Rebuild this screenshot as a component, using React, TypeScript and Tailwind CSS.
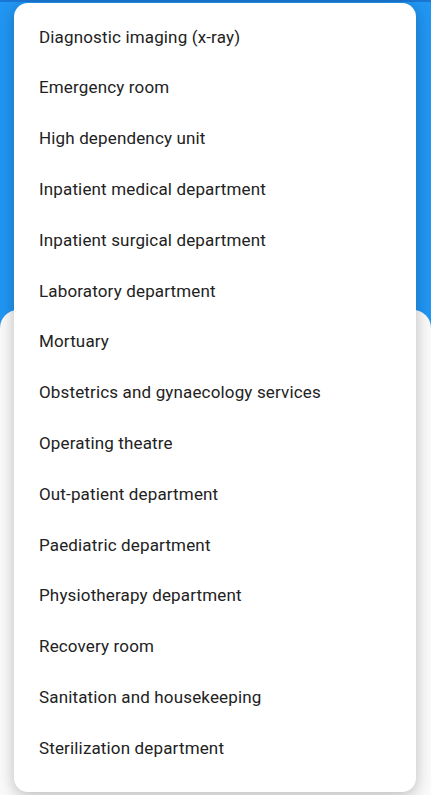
import React from 'react'

const departments = [
  'Diagnostic imaging (x-ray)',
  'Emergency room',
  'High dependency unit',
  'Inpatient medical department',
  'Inpatient surgical department',
  'Laboratory department',
  'Mortuary',
  'Obstetrics and gynaecology services',
  'Operating theatre',
  'Out-patient department',
  'Paediatric department',
  'Physiotherapy department',
  'Recovery room',
  'Sanitation and housekeeping',
  'Sterilization department',
]

const App = () => {
  return (
    <div className="relative h-[795px] w-full overflow-hidden bg-[#2196f3] font-['Roboto',sans-serif]">
      <div className="h-[2px] bg-[#1976d2]" />
      <div className="h-[308px]" />
      <div className="h-[485px] rounded-t-[18px] bg-[#fafafa]" />

      <div className="absolute left-[14px] top-[3px] bottom-[3px] w-[402px] rounded-[14px] bg-white pt-[9px] shadow-[0_4px_16px_rgba(0,0,0,0.25)]">
        <ul className="flex flex-col">
          {departments.map((d) => (
            <li key={d} className="flex h-[50.8px] items-center px-[25px] text-[17px] tracking-[0.15px] text-[#222222]">
              {d}
            </li>
          ))}
        </ul>
      </div>
    </div>
  )
}

export default App
